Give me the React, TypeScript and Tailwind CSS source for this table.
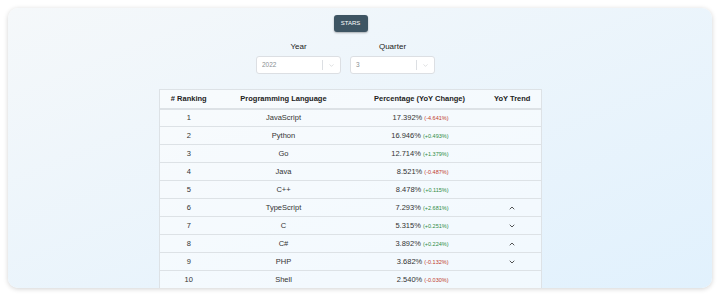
import React from 'react';
import { ChevronDown, ChevronUp } from 'lucide-react';

interface Row {
  rank: number;
  lang: string;
  pct: string;
  change: string;
  trend?: 'up' | 'down';
}

const rows: Row[] = [
  { rank: 1, lang: 'JavaScript', pct: '17.392%', change: '-4.641%' },
  { rank: 2, lang: 'Python', pct: '16.946%', change: '+0.493%' },
  { rank: 3, lang: 'Go', pct: '12.714%', change: '+1.379%' },
  { rank: 4, lang: 'Java', pct: '8.521%', change: '-0.487%' },
  { rank: 5, lang: 'C++', pct: '8.478%', change: '+0.115%' },
  { rank: 6, lang: 'TypeScript', pct: '7.293%', change: '+2.681%', trend: 'up' },
  { rank: 7, lang: 'C', pct: '5.315%', change: '+0.251%', trend: 'down' },
  { rank: 8, lang: 'C#', pct: '3.892%', change: '+0.224%', trend: 'up' },
  { rank: 9, lang: 'PHP', pct: '3.682%', change: '-0.132%', trend: 'down' },
  { rank: 10, lang: 'Shell', pct: '2.540%', change: '-0.030%' },
];

const Select = ({ value }: { value: string }) => (
  <div className="flex h-[18px] w-[85px] items-center rounded-[3px] border border-[#dcdfe3] bg-white">
    <span className="flex-1 pl-[5px] text-[6.5px] text-[#8a8f94]">{value}</span>
    <span className="h-[10px] w-px bg-[#dcdfe3]" />
    <ChevronDown size={7} strokeWidth={1.5} className="mx-[5px] text-[#b5b9bd]" />
  </div>
);

const App: React.FC = () => {
  return (
    <div className="h-[297px] w-[720px] bg-white p-2" style={{ fontFamily: '"Liberation Sans", Arial, sans-serif' }}>
      <div className="h-[280px] overflow-hidden rounded-[10px] bg-gradient-to-br from-[#f5f8fa] to-[#e1f1fd] shadow-[0_1px_5px_rgba(0,0,0,0.18)]">
        <div className="flex flex-col items-center pr-[19px] pt-[7px]">
          {/* Type button */}
          <button className="h-[17px] w-[34px] rounded-[3px] bg-[#3e5563] text-[6px] font-medium text-white shadow-[0_1px_2px_rgba(0,0,0,0.3)]">
            STARS
          </button>

          {/* Filters */}
          <div className="mr-[10px] mt-[8px] flex gap-[9px]">
            <div className="flex flex-col items-center">
              <span className="mb-[3px] text-[8px] leading-[13px] text-[#222]">Year</span>
              <Select value="2022" />
            </div>
            <div className="flex flex-col items-center">
              <span className="mb-[3px] text-[8px] leading-[13px] text-[#222]">Quarter</span>
              <Select value="3" />
            </div>
          </div>

          {/* Ranking table */}
          <table className="mt-[15px] w-[382px] table-fixed border border-[#dde2e6] bg-white/50 text-[7.5px] text-[#333]">
            <colgroup>
              <col className="w-[58px]" />
              <col className="w-[132px]" />
              <col className="w-[140px]" />
              <col className="w-[52px]" />
            </colgroup>
            <thead>
              <tr className="h-[19px] border-b-2 border-[#dde2e6]">
                <th className="font-bold text-[#222]">#&nbsp;Ranking</th>
                <th className="font-bold text-[#222]">Programming Language</th>
                <th className="font-bold text-[#222]">Percentage (YoY Change)</th>
                <th className="pr-[6px] font-bold text-[#222]">YoY Trend</th>
              </tr>
            </thead>
            <tbody>
              {rows.map((r) => (
                <tr key={r.rank} className="h-[18px] border-b border-[#dde2e6]">
                  <td className="text-center">{r.rank}</td>
                  <td className="text-center">{r.lang}</td>
                  <td className="pr-[41px] text-right">
                    {r.pct}{' '}
                    <span className={`text-[5.5px] ${r.change.startsWith('-') ? 'text-[#c0392b]' : 'text-[#2e8b3e]'}`}>
                      ({r.change})
                    </span>
                  </td>
                  <td className="pr-[6px]">
                    {r.trend === 'up' && <ChevronUp size={8} strokeWidth={2.5} className="mx-auto text-[#333]" />}
                    {r.trend === 'down' && <ChevronDown size={8} strokeWidth={2.5} className="mx-auto text-[#333]" />}
                  </td>
                </tr>
              ))}
            </tbody>
          </table>
        </div>
      </div>
    </div>
  );
};

export default App;
